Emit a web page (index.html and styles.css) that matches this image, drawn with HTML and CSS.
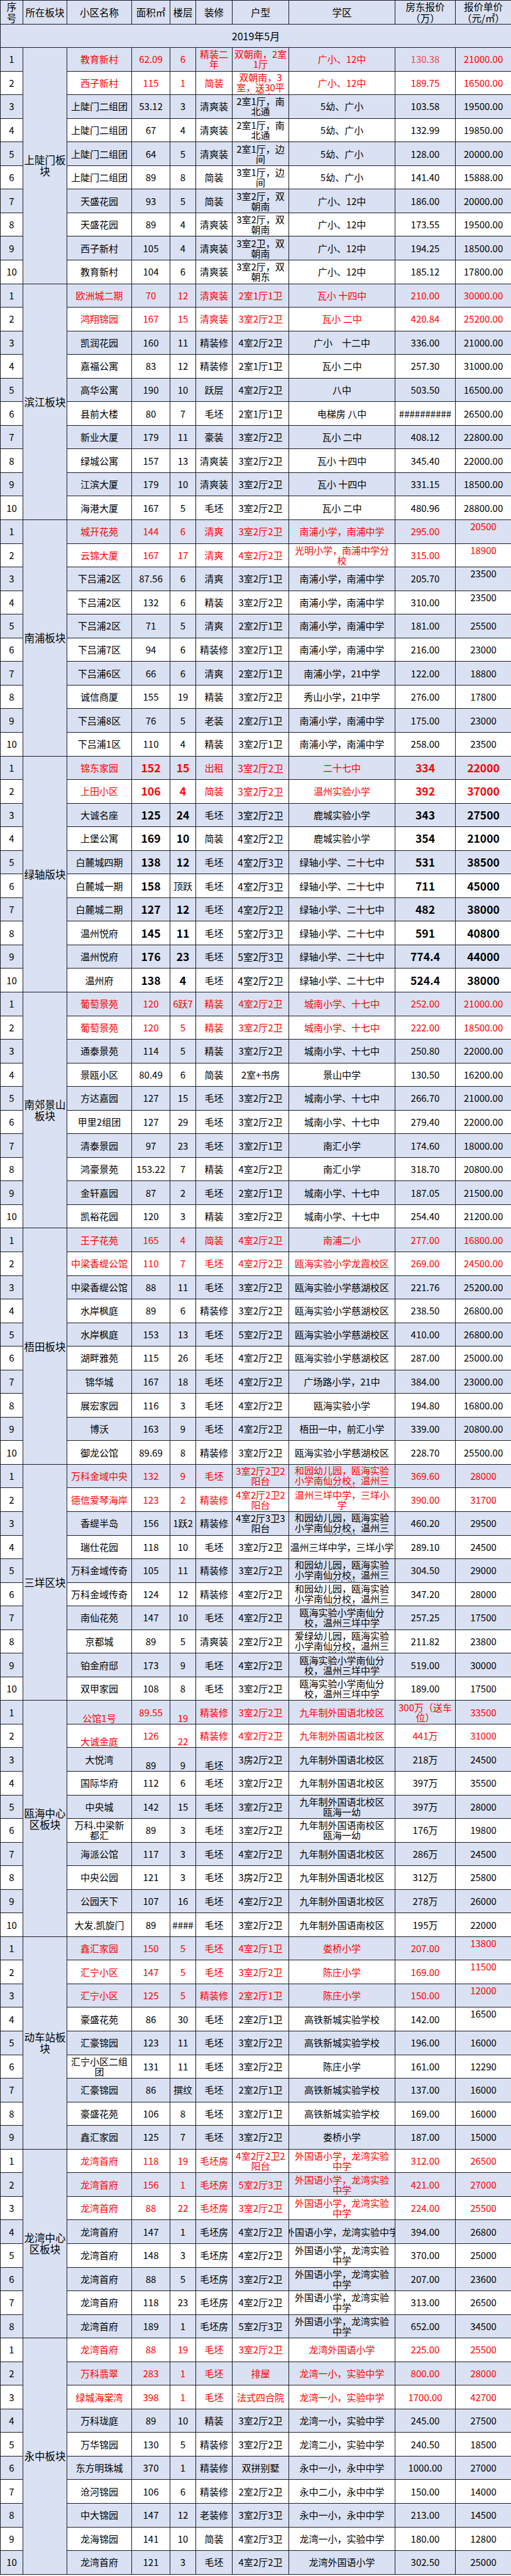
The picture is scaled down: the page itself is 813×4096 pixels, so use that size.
FILE: index.html
```html
<!DOCTYPE html>
<html lang="zh-CN">
<head>
<meta charset="utf-8">
<title>2019年5月 房源报价</title>
<link rel="stylesheet" href="styles.css">
</head>
<body>
<table class="sheet">
<colgroup>
<col class="w1"><col class="w2"><col class="w3"><col class="w4"><col class="w5"><col class="w6"><col class="w7"><col class="w8"><col class="w9"><col class="w10">
</colgroup>
<thead>
<tr><th>序<br>号</th><th>所在板块</th><th>小区名称</th><th>面积㎡</th><th>楼层</th><th>装修</th><th>户型</th><th>学区</th><th>房东报价<br>（万）</th><th>报价单价<br>（元/㎡）</th></tr>
<tr class="title"><th colspan="10">2019年5月</th></tr>
</thead>
<tbody>
<!-- 上陡门板块 -->
<tr class="b r"><td class="n">1</td><td class="blk" rowspan="10">上陡门板块</td><td>教育新村</td><td>62.09</td><td>6</td><td>精装二年</td><td>双朝南，2室1厅</td><td>广小、12中</td><td class="lt">130.38</td><td>21000.00</td></tr>
<tr class="r"><td class="n">2</td><td>西子新村</td><td>115</td><td>1</td><td>简装</td><td class="ct"><div class="clip">双朝南，3<br>室，送30平<br>米露台</div></td><td>广小、12中</td><td>189.75</td><td>16500.00</td></tr>
<tr class="b"><td class="n">3</td><td>上陡门二组团</td><td>53.12</td><td>3</td><td>清爽装</td><td>2室1厅，南北通</td><td>5幼、广小</td><td>103.58</td><td>19500.00</td></tr>
<tr><td class="n">4</td><td>上陡门二组团</td><td>67</td><td>4</td><td>清爽装</td><td>2室1厅，南北通</td><td>5幼、广小</td><td>132.99</td><td>19850.00</td></tr>
<tr class="b"><td class="n">5</td><td>上陡门二组团</td><td>64</td><td>5</td><td>清爽装</td><td>2室1厅，边间</td><td>5幼、广小</td><td>128.00</td><td>20000.00</td></tr>
<tr><td class="n">6</td><td>上陡门二组团</td><td>89</td><td>8</td><td>简装</td><td>3室1厅，边间</td><td>5幼、广小</td><td>141.40</td><td>15888.00</td></tr>
<tr class="b"><td class="n">7</td><td>天盛花园</td><td>93</td><td>5</td><td>简装</td><td>3室2厅，双朝南</td><td>广小、12中</td><td>186.00</td><td>20000.00</td></tr>
<tr><td class="n">8</td><td>天盛花园</td><td>89</td><td>4</td><td>清爽装</td><td>3室2厅，双朝南</td><td>广小、12中</td><td>173.55</td><td>19500.00</td></tr>
<tr class="b"><td class="n">9</td><td>西子新村</td><td>105</td><td>4</td><td>清爽装</td><td>3室2卫，双朝南</td><td>广小、12中</td><td>194.25</td><td>18500.00</td></tr>
<tr><td class="n">10</td><td>教育新村</td><td>104</td><td>6</td><td>清爽装</td><td>3室2厅，双朝东</td><td>广小、12中</td><td>185.12</td><td>17800.00</td></tr>
<!-- 滨江板块 -->
<tr class="b r"><td class="n">1</td><td class="blk" rowspan="10">滨江板块</td><td>欧洲城二期</td><td>70</td><td>12</td><td>清爽装</td><td>2室1厅1卫</td><td>瓦小 十四中</td><td>210.00</td><td>30000.00</td></tr>
<tr class="r"><td class="n">2</td><td>鸿翔锦园</td><td>167</td><td>15</td><td>清爽装</td><td>3室2厅2卫</td><td>瓦小 二中</td><td>420.84</td><td>25200.00</td></tr>
<tr class="b"><td class="n">3</td><td>凯润花园</td><td>160</td><td>11</td><td>精装修</td><td>4室2厅2卫</td><td>广小　十二中</td><td>336.00</td><td>21000.00</td></tr>
<tr><td class="n">4</td><td>嘉福公寓</td><td>83</td><td>12</td><td>精装修</td><td>2室1厅1卫</td><td>瓦小 二中</td><td>257.30</td><td>31000.00</td></tr>
<tr class="b"><td class="n">5</td><td>高华公寓</td><td>190</td><td>10</td><td>跃层</td><td>4室2厅2卫</td><td>八中</td><td>503.50</td><td>16500.00</td></tr>
<tr><td class="n">6</td><td>县前大楼</td><td>80</td><td>7</td><td>毛坯</td><td>2室1厅1卫</td><td>电梯房 八中</td><td>##########</td><td>26500.00</td></tr>
<tr class="b"><td class="n">7</td><td>新业大厦</td><td>179</td><td>11</td><td>豪装</td><td>3室2厅2卫</td><td>瓦小 二中</td><td>408.12</td><td>22800.00</td></tr>
<tr><td class="n">8</td><td>绿城公寓</td><td>157</td><td>13</td><td>清爽装</td><td>3室2厅2卫</td><td>瓦小 十四中</td><td>345.40</td><td>22000.00</td></tr>
<tr class="b"><td class="n">9</td><td>江滨大厦</td><td>179</td><td>10</td><td>清爽装</td><td>3室2厅2卫</td><td>瓦小 十四中</td><td>331.15</td><td>18500.00</td></tr>
<tr><td class="n">10</td><td>海港大厦</td><td>167</td><td>5</td><td>毛坯</td><td>3室2厅2卫</td><td>瓦小 二中</td><td>480.96</td><td>28800.00</td></tr>
<!-- 南浦板块 -->
<tr class="b r"><td class="n">1</td><td class="blk" rowspan="10">南浦板块</td><td>城开花苑</td><td>144</td><td>6</td><td>清爽</td><td>3室2厅2卫</td><td>南浦小学，南浦中学</td><td>295.00</td><td class="t">20500</td></tr>
<tr class="r"><td class="n">2</td><td>云锦大厦</td><td>167</td><td>17</td><td>清爽</td><td>4室2厅2卫</td><td>光明小学，南浦中学分校</td><td>315.00</td><td class="t">18900</td></tr>
<tr class="b"><td class="n">3</td><td>下吕浦2区</td><td>87.56</td><td>6</td><td>清爽</td><td>3室2厅1卫</td><td>南浦小学，南浦中学</td><td>205.70</td><td class="t">23500</td></tr>
<tr><td class="n">4</td><td>下吕浦2区</td><td>132</td><td>6</td><td>精装</td><td>3室2厅2卫</td><td>南浦小学，南浦中学</td><td>310.00</td><td class="t">23500</td></tr>
<tr class="b"><td class="n">5</td><td>下吕浦2区</td><td>71</td><td>5</td><td>清爽</td><td>2室2厅1卫</td><td>南浦小学，南浦中学</td><td>181.00</td><td>25500</td></tr>
<tr><td class="n">6</td><td>下吕浦7区</td><td>94</td><td>6</td><td>精装修</td><td>3室2厅1卫</td><td>南浦小学，南浦中学</td><td>216.00</td><td>23000</td></tr>
<tr class="b"><td class="n">7</td><td>下吕浦6区</td><td>66</td><td>6</td><td>清爽</td><td>2室2厅1卫</td><td>南浦小学，21中学</td><td>122.00</td><td>18800</td></tr>
<tr><td class="n">8</td><td>诚信商厦</td><td>155</td><td>19</td><td>精装</td><td>3室2厅2卫</td><td>秀山小学，21中学</td><td>276.00</td><td>17800</td></tr>
<tr class="b"><td class="n">9</td><td>下吕浦8区</td><td>76</td><td>5</td><td>老装</td><td>2室2厅1卫</td><td>南浦小学，南浦中学</td><td>175.00</td><td>23000</td></tr>
<tr><td class="n">10</td><td>下吕浦1区</td><td>110</td><td>4</td><td>精装</td><td>3室2厅1卫</td><td>南浦小学，南浦中学</td><td>258.00</td><td>23500</td></tr>
<!-- 绿轴版块 -->
<tr class="b r"><td class="n">1</td><td class="blk" rowspan="10">绿轴版块</td><td>锦东家园</td><td class="g">152</td><td class="g">15</td><td>出租</td><td class="h">3室2厅2卫</td><td>二十七中</td><td class="g">334</td><td class="g">22000</td></tr>
<tr class="r"><td class="n">2</td><td>上田小区</td><td class="g">106</td><td class="g">4</td><td>简装</td><td class="h">3室2厅2卫</td><td>温州实验小学</td><td class="g">392</td><td class="g">37000</td></tr>
<tr class="b"><td class="n">3</td><td>大诚名座</td><td class="g">125</td><td class="g">24</td><td>毛坯</td><td class="h">3室2厅2卫</td><td>鹿城实验小学</td><td class="g">343</td><td class="g">27500</td></tr>
<tr><td class="n">4</td><td>上堡公寓</td><td class="g">169</td><td class="g">10</td><td>简装</td><td class="h">4室2厅2卫</td><td>鹿城实验小学</td><td class="g">354</td><td class="g">21000</td></tr>
<tr class="b"><td class="n">5</td><td>白麓城四期</td><td class="g">138</td><td class="g">12</td><td>毛坯</td><td class="h">4室2厅3卫</td><td>绿轴小学、二十七中</td><td class="g">531</td><td class="g">38500</td></tr>
<tr><td class="n">6</td><td>白麓城一期</td><td class="g">158</td><td>顶跃</td><td>毛坯</td><td class="h">4室2厅3卫</td><td>绿轴小学、二十七中</td><td class="g">711</td><td class="g">45000</td></tr>
<tr class="b"><td class="n">7</td><td>白麓城二期</td><td class="g">127</td><td class="g">12</td><td>毛坯</td><td class="h">4室2厅2卫</td><td>绿轴小学、二十七中</td><td class="g">482</td><td class="g">38000</td></tr>
<tr><td class="n">8</td><td>温州悦府</td><td class="g">145</td><td class="g">11</td><td>毛坯</td><td class="h">5室2厅3卫</td><td>绿轴小学、二十七中</td><td class="g">591</td><td class="g">40800</td></tr>
<tr class="b"><td class="n">9</td><td>温州悦府</td><td class="g">176</td><td class="g">23</td><td>毛坯</td><td class="h">5室2厅3卫</td><td>绿轴小学、二十七中</td><td class="g">774.4</td><td class="g">44000</td></tr>
<tr><td class="n">10</td><td>温州府</td><td class="g">138</td><td class="g">4</td><td>毛坯</td><td class="h">4室2厅2卫</td><td>绿轴小学、二十七中</td><td class="g">524.4</td><td class="g">38000</td></tr>
<!-- 南郊景山板块 -->
<tr class="b r"><td class="n">1</td><td class="blk" rowspan="10">南郊景山板块</td><td>葡萄景苑</td><td>120</td><td>6跃7</td><td>精装</td><td>4室2厅2卫</td><td>城南小学、十七中</td><td>252.00</td><td>21000.00</td></tr>
<tr class="r"><td class="n">2</td><td>葡萄景苑</td><td>120</td><td>5</td><td>精装</td><td>3室2厅2卫</td><td>城南小学、十七中</td><td>222.00</td><td>18500.00</td></tr>
<tr class="b"><td class="n">3</td><td>通泰景苑</td><td>114</td><td>5</td><td>精装</td><td>3室2厅2卫</td><td>城南小学、十七中</td><td>250.80</td><td>22000.00</td></tr>
<tr><td class="n">4</td><td>景瓯小区</td><td>80.49</td><td>6</td><td>简装</td><td>2室+书房</td><td>景山中学</td><td>130.50</td><td>16200.00</td></tr>
<tr class="b"><td class="n">5</td><td>方达嘉园</td><td>127</td><td>15</td><td>毛坯</td><td>3室2厅2卫</td><td>城南小学、十七中</td><td>266.70</td><td>21000.00</td></tr>
<tr><td class="n">6</td><td>甲里2组团</td><td>127</td><td>29</td><td>毛坯</td><td>3室2厅2卫</td><td>城南小学、十七中</td><td>279.40</td><td>22000.00</td></tr>
<tr class="b"><td class="n">7</td><td>清泰景园</td><td>97</td><td>23</td><td>毛坯</td><td>3室2厅1卫</td><td>南汇小学</td><td>174.60</td><td>18000.00</td></tr>
<tr><td class="n">8</td><td>鸿豪景苑</td><td>153.22</td><td>7</td><td>精装</td><td>4室2厅2卫</td><td>南汇小学</td><td>318.70</td><td>20800.00</td></tr>
<tr class="b"><td class="n">9</td><td>金轩嘉园</td><td>87</td><td>2</td><td>毛坯</td><td>2室2厅1卫</td><td>城南小学、十七中</td><td>187.05</td><td>21500.00</td></tr>
<tr><td class="n">10</td><td>凯裕花园</td><td>120</td><td>3</td><td>精装</td><td>3室2厅2卫</td><td>城南小学、十七中</td><td>254.40</td><td>21200.00</td></tr>
<!-- 梧田板块 -->
<tr class="b r"><td class="n">1</td><td class="blk" rowspan="10">梧田板块</td><td>王子花苑</td><td>165</td><td>4</td><td>简装</td><td>4室2厅2卫</td><td>南浦二小</td><td>277.00</td><td>16800.00</td></tr>
<tr class="r"><td class="n">2</td><td>中梁香缇公馆</td><td>110</td><td>7</td><td>毛坯</td><td>4室2厅2卫</td><td>瓯海实验小学龙霞校区</td><td>269.00</td><td>24500.00</td></tr>
<tr class="b"><td class="n">3</td><td>中梁香缇公馆</td><td>88</td><td>11</td><td>毛坯</td><td>3室2厅2卫</td><td>瓯海实验小学慈湖校区</td><td>221.76</td><td>25200.00</td></tr>
<tr><td class="n">4</td><td>水岸枫庭</td><td>89</td><td>6</td><td>精装修</td><td>3室2厅2卫</td><td>瓯海实验小学慈湖校区</td><td>238.50</td><td>26800.00</td></tr>
<tr class="b"><td class="n">5</td><td>水岸枫庭</td><td>153</td><td>13</td><td>毛坯</td><td>5室2厅2卫</td><td>瓯海实验小学慈湖校区</td><td>410.00</td><td>26800.00</td></tr>
<tr><td class="n">6</td><td>湖畔雅苑</td><td>115</td><td>26</td><td>毛坯</td><td>4室2厅2卫</td><td>瓯海实验小学慈湖校区</td><td>287.00</td><td>25000.00</td></tr>
<tr class="b"><td class="n">7</td><td>锦华城</td><td>167</td><td>18</td><td>毛坯</td><td>4室2厅2卫</td><td>广场路小学，21中</td><td>384.00</td><td>23000.00</td></tr>
<tr><td class="n">8</td><td>展宏家园</td><td>116</td><td>3</td><td>毛坯</td><td>4室2厅2卫</td><td>瓯海实验小学</td><td>194.80</td><td>16800.00</td></tr>
<tr class="b"><td class="n">9</td><td>博沃</td><td>163</td><td>9</td><td>毛坯</td><td>4室2厅2卫</td><td>梧田一中，前汇小学</td><td>339.00</td><td>20800.00</td></tr>
<tr><td class="n">10</td><td>御龙公馆</td><td>89.69</td><td>8</td><td>精装修</td><td>3室2厅2卫</td><td>瓯海实验小学慈湖校区</td><td>228.70</td><td>25500.00</td></tr>
<!-- 三垟区块 -->
<tr class="b r"><td class="n">1</td><td class="blk" rowspan="10">三垟区块</td><td>万科金域中央</td><td>132</td><td>9</td><td>毛坯</td><td>3室2厅2卫2阳台</td><td class="ct"><div class="clip">和园幼儿园，瓯海实验小学南仙分校，温州三垟中学</div></td><td>369.60</td><td>28000</td></tr>
<tr class="r"><td class="n">2</td><td>德信爱琴海岸</td><td>123</td><td>2</td><td>精装修</td><td>4室2厅2卫2阳台</td><td>温州三垟中学，三垟小学</td><td>390.00</td><td>31700</td></tr>
<tr class="b"><td class="n">3</td><td>香缇半岛</td><td>156</td><td>1跃2</td><td>精装修</td><td>4室2厅3卫3阳台</td><td class="ct"><div class="clip">和园幼儿园，瓯海实验小学南仙分校，温州三垟中学</div></td><td>460.20</td><td>29500</td></tr>
<tr><td class="n">4</td><td>瑞仕花园</td><td>118</td><td>10</td><td>毛坯</td><td>3室2厅2卫</td><td><div class="nw">温州三垟中学，三垟小学</div></td><td>289.10</td><td>24500</td></tr>
<tr class="b"><td class="n">5</td><td>万科金域传奇</td><td>105</td><td>11</td><td>精装修</td><td>3室2厅2卫</td><td class="ct"><div class="clip">和园幼儿园，瓯海实验小学南仙分校，温州三垟中学</div></td><td>304.50</td><td>29000</td></tr>
<tr><td class="n">6</td><td>万科金域传奇</td><td>124</td><td>12</td><td>精装修</td><td>4室2厅2卫</td><td class="ct"><div class="clip">和园幼儿园，瓯海实验小学南仙分校，温州三垟中学</div></td><td>347.20</td><td>28000</td></tr>
<tr class="b"><td class="n">7</td><td>南仙花苑</td><td>147</td><td>10</td><td>毛坯</td><td>4室2厅2卫</td><td>瓯海实验小学南仙分<br>校，温州三垟中学</td><td>257.25</td><td>17500</td></tr>
<tr><td class="n">8</td><td>京都城</td><td>89</td><td>5</td><td>清爽装</td><td>2室2厅2卫</td><td class="ct"><div class="clip">爱绿幼儿园，瓯海实验小学南仙分校，温州三垟中学</div></td><td>211.82</td><td>23800</td></tr>
<tr class="b"><td class="n">9</td><td>铂金府邸</td><td>173</td><td>9</td><td>毛坯</td><td>4室2厅2卫</td><td>瓯海实验小学南仙分<br>校，温州三垟中学</td><td>519.00</td><td>30000</td></tr>
<tr><td class="n">10</td><td>双甲家园</td><td>108</td><td>8</td><td>毛坯</td><td>3室2厅2卫</td><td>瓯海实验小学南仙分<br>校，温州三垟中学</td><td>189.00</td><td>17500</td></tr>
<!-- 瓯海中心区板块 -->
<tr class="b r"><td class="n">1</td><td class="blk" rowspan="10">瓯海中心区板块</td><td class="d">公馆1号</td><td>89.55</td><td class="d">19</td><td>精装修</td><td>3室2厅2卫</td><td>九年制外国语北校区</td><td>300万（送车位）</td><td>33500</td></tr>
<tr class="r"><td class="n">2</td><td class="d">大诚金庭</td><td>126</td><td class="d">22</td><td>精装修</td><td>4室2厅2卫</td><td>九年制外国语北校区</td><td>441万</td><td>31000</td></tr>
<tr class="b"><td class="n">3</td><td>大悦湾</td><td class="d">89</td><td class="d">9</td><td class="d">毛坯</td><td>3房2厅2卫</td><td>九年制外国语北校区</td><td>218万</td><td>24500</td></tr>
<tr><td class="n">4</td><td>国际华府</td><td>112</td><td>6</td><td>毛坯</td><td>3室2厅2卫</td><td>九年制外国语北校区</td><td>397万</td><td>35500</td></tr>
<tr class="b"><td class="n">5</td><td>中央城</td><td>142</td><td>15</td><td>毛坯</td><td>3室2厅2卫</td><td>九年制外国语北校区<br>瓯海一幼</td><td>397万</td><td>28000</td></tr>
<tr><td class="n">6</td><td>万科.中梁新<br>都汇</td><td>89</td><td>3</td><td>毛坯</td><td>3室2厅2卫</td><td>九年制外国语南校区<br>瓯海一幼</td><td>176万</td><td>19800</td></tr>
<tr class="b"><td class="n">7</td><td>海派公馆</td><td>117</td><td>3</td><td>毛坯</td><td>4室2厅2卫</td><td>九年制外国语北校区</td><td>286万</td><td>24500</td></tr>
<tr><td class="n">8</td><td>中央公园</td><td>121</td><td>3</td><td>毛坯</td><td>3房2厅2卫</td><td>九年制外国语北校区</td><td>312万</td><td>25800</td></tr>
<tr class="b"><td class="n">9</td><td>公园天下</td><td>107</td><td>16</td><td>毛坯</td><td>4室2厅2卫</td><td>九年制外国语北校区</td><td>278万</td><td>26000</td></tr>
<tr><td class="n">10</td><td>大发.凯旋门</td><td>89</td><td>####</td><td>毛坯</td><td>3室2厅2卫</td><td>九年制外国语南校区</td><td>195万</td><td>22000</td></tr>
<!-- 动车站板块 -->
<tr class="b r"><td class="n">1</td><td class="blk" rowspan="9">动车站板块</td><td>鑫汇家园</td><td>150</td><td>5</td><td>毛坯</td><td>4室2厅1卫</td><td>娄桥小学</td><td>207.00</td><td class="t">13800</td></tr>
<tr class="r"><td class="n">2</td><td>汇宁小区</td><td>147</td><td>5</td><td>毛坯</td><td>3室2厅2卫</td><td>陈庄小学</td><td>169.00</td><td class="t">11500</td></tr>
<tr class="b r"><td class="n">3</td><td>汇宁小区</td><td>125</td><td>5</td><td>精装修</td><td>2室2厅1卫</td><td>陈庄小学</td><td>150.00</td><td class="t">12000</td></tr>
<tr><td class="n">4</td><td>豪盛花苑</td><td>86</td><td>30</td><td>毛坯</td><td>2室2厅1卫</td><td>高铁新城实验学校</td><td>142.00</td><td class="t">16500</td></tr>
<tr class="b"><td class="n">5</td><td>汇豪锦园</td><td>123</td><td>11</td><td>毛坯</td><td>3室2厅2卫</td><td>高铁新城实验学校</td><td>196.00</td><td>16000</td></tr>
<tr><td class="n">6</td><td>汇宁小区二组团</td><td>131</td><td>11</td><td>毛坯</td><td>3室2厅2卫</td><td>陈庄小学</td><td>161.00</td><td>12290</td></tr>
<tr class="b"><td class="n">7</td><td>汇豪锦园</td><td>86</td><td>撰纹</td><td>毛坯</td><td>2室2厅1卫</td><td>高铁新城实验学校</td><td>137.00</td><td>16000</td></tr>
<tr><td class="n">8</td><td>豪盛花苑</td><td>106</td><td>8</td><td>毛坯</td><td>3室2厅1卫</td><td>高铁新城实验学校</td><td>169.00</td><td>16000</td></tr>
<tr class="b"><td class="n">9</td><td>鑫汇家园</td><td>125</td><td>7</td><td>毛坯</td><td>3室2厅2卫</td><td>娄桥小学</td><td>187.00</td><td>15000</td></tr>
<!-- 龙湾中心区板块 -->
<tr class="r"><td class="n">1</td><td class="blk" rowspan="8">龙湾中心区板块</td><td>龙湾首府</td><td>118</td><td>19</td><td>毛坯房</td><td>4室2厅2卫2阳台</td><td>外国语小学，龙湾实验中学</td><td>312.00</td><td>26500</td></tr>
<tr class="b r"><td class="n">2</td><td>龙湾首府</td><td>156</td><td>1</td><td>毛坯房</td><td>5室2厅3卫</td><td>外国语小学，龙湾实验中学</td><td>421.00</td><td>27000</td></tr>
<tr class="r"><td class="n">3</td><td>龙湾首府</td><td>88</td><td>22</td><td>毛坯房</td><td>3室2厅2卫</td><td>外国语小学，龙湾实验中学</td><td>224.00</td><td>25500</td></tr>
<tr class="b"><td class="n">4</td><td>龙湾首府</td><td>147</td><td>1</td><td>毛坯房</td><td>4室2厅2卫</td><td><div class="nw">外国语小学，龙湾实验中学</div></td><td>394.00</td><td>26800</td></tr>
<tr><td class="n">5</td><td>龙湾首府</td><td>148</td><td>3</td><td>毛坯房</td><td>4室2厅2卫</td><td>外国语小学，龙湾实验中学</td><td>370.00</td><td>25000</td></tr>
<tr class="b"><td class="n">6</td><td>龙湾首府</td><td>88</td><td>5</td><td>毛坯房</td><td>3室2厅2卫</td><td>外国语小学，龙湾实验中学</td><td>207.00</td><td>23600</td></tr>
<tr><td class="n">7</td><td>龙湾首府</td><td>118</td><td>23</td><td>毛坯房</td><td>4室2厅2卫</td><td>外国语小学，龙湾实验中学</td><td>313.00</td><td>26500</td></tr>
<tr class="b"><td class="n">8</td><td>龙湾首府</td><td>189</td><td>1</td><td>毛坯房</td><td>5室2厅3卫</td><td>外国语小学，龙湾实验中学</td><td>652.00</td><td>34500</td></tr>
<!-- 永中板块 -->
<tr class="r"><td class="n">1</td><td class="blk" rowspan="10">永中板块</td><td>龙湾首府</td><td>88</td><td>19</td><td>毛坯</td><td>3室2厅2卫</td><td>龙湾外国语小学</td><td>225.00</td><td>25500</td></tr>
<tr class="b r"><td class="n">2</td><td>万科翡翠</td><td>283</td><td>1</td><td>毛坯</td><td>排屋</td><td>龙湾一小，实验中学</td><td>800.00</td><td>28000</td></tr>
<tr class="r"><td class="n">3</td><td>绿城海棠湾</td><td>398</td><td>1</td><td>毛坯</td><td>法式四合院</td><td>龙湾一小，实验中学</td><td>1700.00</td><td>42700</td></tr>
<tr class="b"><td class="n">4</td><td>万科珑庭</td><td>89</td><td>10</td><td>精装</td><td>3室2厅2卫</td><td>龙湾一小，实验中学</td><td>245.00</td><td>27500</td></tr>
<tr><td class="n">5</td><td>万华锦园</td><td>130</td><td>5</td><td>精装修</td><td>3室2厅2卫</td><td>龙湾二小，实验中学</td><td>240.50</td><td>18500</td></tr>
<tr class="b"><td class="n">6</td><td>东方明珠城</td><td>370</td><td>1</td><td>精装修</td><td>双拼别墅</td><td>永中一小，永中中学</td><td>1000.00</td><td>27000</td></tr>
<tr><td class="n">7</td><td>沧河锦园</td><td>106</td><td>6</td><td>精装修</td><td>2室2厅2卫</td><td>永中二小，永中中学</td><td>150.00</td><td>14000</td></tr>
<tr class="b"><td class="n">8</td><td>中大锦园</td><td>147</td><td>12</td><td>老装修</td><td>3室2厅3卫</td><td>永中一小，永中中学</td><td>213.00</td><td>14500</td></tr>
<tr><td class="n">9</td><td>龙海锦园</td><td>141</td><td>10</td><td>简装</td><td>4室2厅3卫</td><td>龙湾一小，实验中学</td><td>180.00</td><td>12800</td></tr>
<tr class="b"><td class="n">10</td><td>龙湾首府</td><td>121</td><td>3</td><td>毛坯</td><td>4室2厅2卫</td><td>龙湾外国语小学</td><td>302.50</td><td>25000</td></tr>
</tbody>
</table>
</body>
</html>
```

FILE: styles.css
```css
html, body {
  margin: 0;
  padding: 0;
  background: #ffffff;
}

.sheet {
  border-collapse: collapse;
  table-layout: fixed;
  width: 813px;
  font-family: "Noto Sans CJK SC", "Noto Sans", sans-serif;
  font-size: 15px;
  color: #000;
}

.w1 { width: 36px; }
.w2 { width: 70px; }
.w3 { width: 103px; }
.w4 { width: 61px; }
.w5 { width: 41px; }
.w6 { width: 58px; }
.w7 { width: 90px; }
.w8 { width: 169px; }
.w9 { width: 96px; }
.w10 { width: 89px; }

.sheet tr {
  height: 37.56px;
}

.sheet td,
.sheet th {
  border: 1px solid #1c1c24;
  padding: 0 2px;
  text-align: center;
  vertical-align: middle;
  line-height: 16px;
  overflow: hidden;
  font-weight: normal;
}

.sheet thead th {
  background: #d9e1f2;
  font-size: 15.5px;
  line-height: 18px;
}

.sheet thead tr.title th {
  font-size: 16px;
}

.sheet tr.b {
  background: #d9e1f2;
}

.sheet tr.r {
  color: #ff0000;
}

.sheet td.n {
  color: #000;
  font-size: 15px;
}

.sheet td.blk {
  background: #d9e1f2;
  color: #000;
  font-size: 16.5px;
  line-height: 18px;
  padding: 0 1px;
}

.sheet td.t {
  vertical-align: top;
  padding-top: 2px;
}

.sheet td.d {
  vertical-align: bottom;
  padding-bottom: 1px;
}

.sheet td.ct {
  vertical-align: top;
  padding-top: 1px;
}

.clip {
  height: 35px;
  overflow: hidden;
}

.nw {
  display: flex;
  justify-content: center;
  white-space: nowrap;
}

.sheet td.g {
  font-size: 17.5px;
  font-weight: bold;
}

.sheet td.h {
  font-size: 15.5px;
}

.sheet td.lt {
  color: #f0494f;
}
```
